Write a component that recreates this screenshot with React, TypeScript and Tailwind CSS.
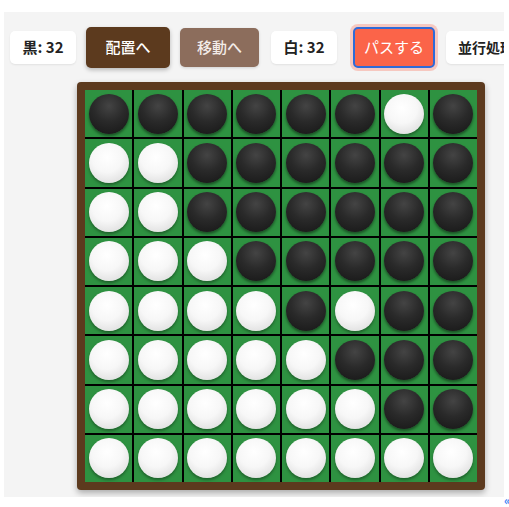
import React from "react";

const board = [
  "BBBBBBWB",
  "WWBBBBBB",
  "WWBBBBBB",
  "WWWBBBBB",
  "WWWWBWBB",
  "WWWWWBBB",
  "WWWWWWBB",
  "WWWWWWWW",
];

function Disc({ c }: { c: string }) {
  if (c === "B") {
    return (
      <div className="w-[40px] h-[40px] rounded-full bg-[radial-gradient(circle_at_50%_30%,#444444_0%,#2a2a2a_45%,#151515_100%)] shadow-[0_2px_3px_rgba(0,0,0,0.45)]" />
    );
  }
  return (
    <div className="w-[40px] h-[40px] rounded-full bg-[radial-gradient(circle_at_45%_35%,#ffffff_0%,#f7f7f7_45%,#d4d4d4_100%)] shadow-[0_2px_3px_rgba(0,0,0,0.35)]" />
  );
}

export default function App() {
  return (
    <div
      className="w-[509px] h-[507px] bg-white overflow-hidden relative"
      style={{ fontFamily: '"Noto Sans CJK JP", "Noto Sans", sans-serif' }}
    >
      <div className="ml-[4px] mt-[12px] w-[500px] h-[485px] bg-[#f4f4f4] overflow-hidden">
        <div className="flex items-center pl-[6px] pt-[15px] whitespace-nowrap">
          <div className="shrink-0 w-[66px] h-[33px] bg-white rounded-[5px] shadow-[0_1px_2px_rgba(0,0,0,0.08)] flex items-center justify-center text-[15px] font-bold text-[#222]">
            黒: 32
          </div>
          <div className="shrink-0 ml-[10px] w-[84px] h-[41px] bg-[#5c3a1e] rounded-[5px] shadow-[0_2px_4px_rgba(0,0,0,0.25)] flex items-center justify-center text-[15px] font-medium text-white">
            配置へ
          </div>
          <div className="shrink-0 ml-[10px] w-[79px] h-[39px] bg-[#8c6d5c] rounded-[5px] shadow-[0_1px_3px_rgba(0,0,0,0.15)] flex items-center justify-center text-[15px] font-medium text-[#f3ece8]">
            移動へ
          </div>
          <div className="shrink-0 ml-[12px] w-[66px] h-[33px] bg-white rounded-[5px] shadow-[0_1px_2px_rgba(0,0,0,0.08)] flex items-center justify-center text-[15px] font-bold text-[#222]">
            白: 32
          </div>
          <div className="shrink-0 ml-[16px] w-[82px] h-[41px] bg-[#fb6449] rounded-[5px] border-2 border-[#2f6ad8] shadow-[0_0_0_3px_rgba(251,100,73,0.3)] flex items-center justify-center text-[15px] text-white">
            パスする
          </div>
          <div className="shrink-0 ml-[11px] w-[90px] h-[33px] bg-white rounded-[5px] shadow-[0_1px_2px_rgba(0,0,0,0.08)] flex items-center pl-[12px] text-[14px] font-bold text-[#222]">
            並行処理
          </div>
        </div>
        <div className="ml-[73px] mt-[14px] w-[408px] p-[8px] bg-[#5c3a1e] rounded-[4px] shadow-[0_3px_6px_rgba(0,0,0,0.3)]">
          <div className="grid grid-cols-8 gap-[2px] bg-black">
            {board.flatMap((row, r) =>
              row.split("").map((c, i) => (
                <div
                  key={`${r}-${i}`}
                  className="aspect-square bg-[#2e9241] flex items-center justify-center"
                >
                  <Disc c={c} />
                </div>
              ))
            )}
          </div>
        </div>
      </div>
      <div className="absolute left-[504px] top-[494px] text-[#3b82f6] text-[12px] leading-none font-bold">«</div>
    </div>
  );
}
